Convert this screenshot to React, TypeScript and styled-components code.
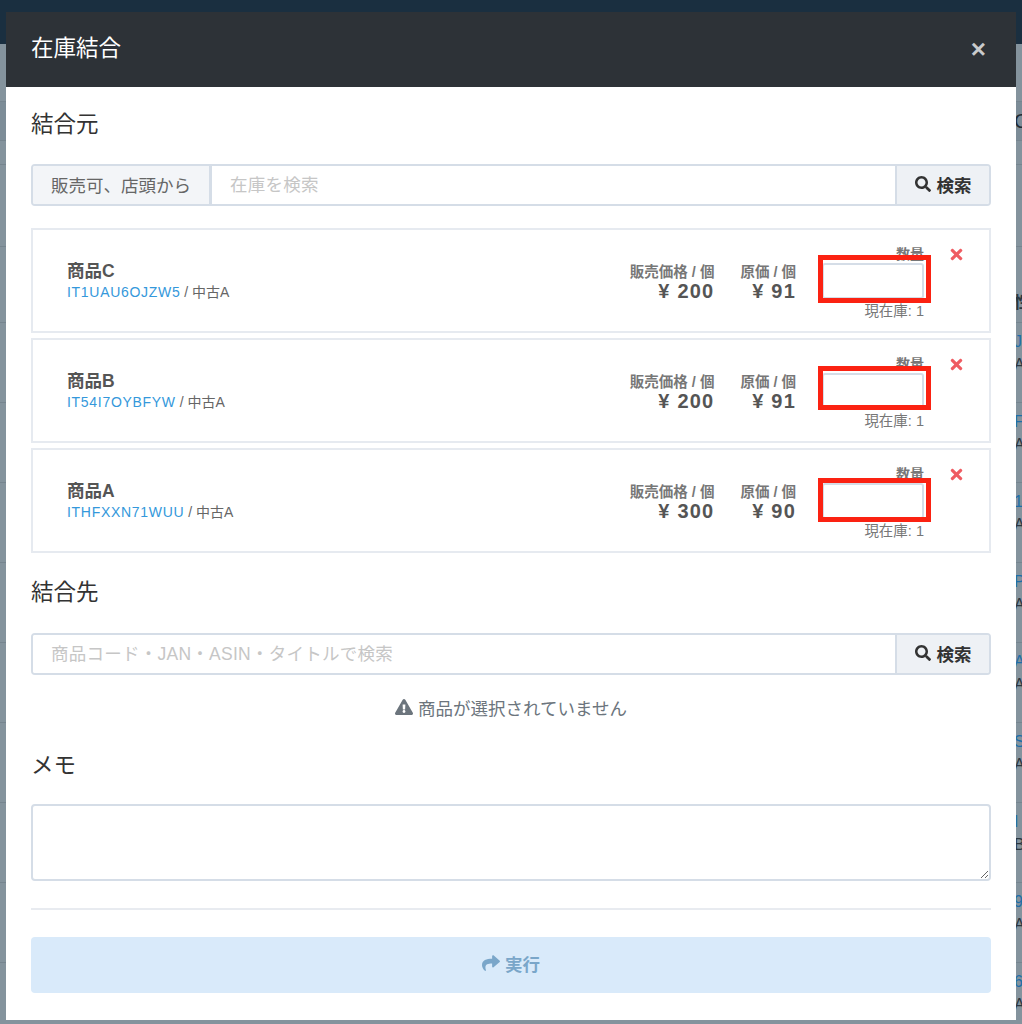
import styled, { createGlobalStyle } from 'styled-components';
import { FaExclamationTriangle, FaSearch, FaShare, FaTimes } from 'react-icons/fa';

const items = [
  { name: '商品C', code: 'IT1UAU6OJZW5', grade: '中古A', price: '200', cost: '91', markTop: 27, markHeight: 48 },
  { name: '商品B', code: 'IT54I7OYBFYW', grade: '中古A', price: '200', cost: '91', markTop: 28, markHeight: 44 },
  { name: '商品A', code: 'ITHFXXN71WUU', grade: '中古A', price: '300', cost: '90', markTop: 30, markHeight: 44 },
];

const backRows = [
  ['J', 'A'], ['F', 'A'], ['1', 'A'], ['P', 'A'], ['A', 'A'], ['S', 'A'], ['I', 'B'], ['9', 'A'], ['6', 'A'],
];

function SearchBar({ placeholder, prefix }: { placeholder: string; prefix?: string }) {
  return (
    <InputGroup>
      {prefix && <Addon>{prefix}</Addon>}
      <SearchInput placeholder={placeholder} />
      <SearchButton type="button"><FaSearch size={16} />検索</SearchButton>
    </InputGroup>
  );
}

function App() {
  return (
    <Page>
      <GlobalStyle />
      <Backdrop>
        <TopBar />
        <BackSpacer />
        <BackToolbar>C</BackToolbar>
        <BackLine $height={24} />
        <BackLine $height={82} />
        <BackLine $height={76}><BackHead>性</BackHead></BackLine>
        {backRows.map((r, i) => (
          <BackRow key={i}>
            <BackCode>{r[0]}</BackCode>
            <BackGrade>{r[1]}</BackGrade>
          </BackRow>
        ))}
      </Backdrop>
      <Modal>
        <ModalHeader>
          <ModalTitle>在庫結合</ModalTitle>
          <CloseButton type="button">×</CloseButton>
        </ModalHeader>
        <ModalBody>
          <SectionTitle>結合元</SectionTitle>
          <SearchBar prefix="販売可、店頭から" placeholder="在庫を検索" />
          <CardList>
            {items.map((item) => (
              <Card key={item.code}>
                <ItemInfo>
                  <ItemName>{item.name}</ItemName>
                  <ItemMeta><ItemCode>{item.code}</ItemCode> / {item.grade}</ItemMeta>
                </ItemInfo>
                <PriceCol>
                  <PriceLabel>販売価格 / 個</PriceLabel>
                  <PriceValue>¥ {item.price}</PriceValue>
                </PriceCol>
                <PriceCol>
                  <PriceLabel>原価 / 個</PriceLabel>
                  <PriceValue>¥ {item.cost}</PriceValue>
                </PriceCol>
                <QtyCol>
                  <QtyLabel>数量</QtyLabel>
                  <QtyInput />
                  <StockLabel>現在庫: 1</StockLabel>
                </QtyCol>
                <DeleteIcon><FaTimes size={17} /></DeleteIcon>
                <RedMark $top={item.markTop} $height={item.markHeight} />
              </Card>
            ))}
          </CardList>
          <TargetTitle>結合先</TargetTitle>
          <SearchBar placeholder="商品コード・JAN・ASIN・タイトルで検索" />
          <Warning><FaExclamationTriangle size={18} />商品が選択されていません</Warning>
          <MemoTitle>メモ</MemoTitle>
          <Memo />
          <Divider />
          <RunButton type="button"><FaShare size={18} />実行</RunButton>
        </ModalBody>
      </Modal>
    </Page>
  );
}

export default App;

const GlobalStyle = createGlobalStyle`
html, body {
  margin: 0;
  padding: 0;
  height: 1024px;
  overflow: hidden;
  background: #84939d;
}
* {
  box-sizing: border-box;
}
body, input, textarea, button {
  font-family: "Liberation Sans", "Noto Sans CJK JP", sans-serif;
}
`;

const Page = styled.div`
position: relative;
width: 1022px;
height: 1024px;
overflow: hidden;
background: #84939d;
`;

const Backdrop = styled.div`
display: flex;
flex-direction: column;
height: 1024px;
`;

const TopBar = styled.div`
height: 44px;
background: #1a2f40;
flex-shrink: 0;
`;

const BackSpacer = styled.div`
height: 57px;
flex-shrink: 0;
`;

const BackToolbar = styled.div`
height: 40px;
flex-shrink: 0;
padding-left: 1014px;
background: #7c8c97;
border-top: 1px solid #76858f;
border-bottom: 1px solid #76858f;
color: #1f2a33;
font-size: 20px;
line-height: 38px;
`;

const BackLine = styled.div<{ $height: number }>`
height: ${(p) => p.$height}px;
flex-shrink: 0;
border-bottom: 1px solid #76858f;
position: relative;
`;

const BackHead = styled.span`
position: absolute;
left: 1014px;
bottom: 9px;
color: #2b3640;
font-size: 16px;
font-weight: bold;
`;

const BackRow = styled.div`
height: 80px;
flex-shrink: 0;
padding: 8px 0 0 1014px;
border-bottom: 1px solid #76858f;
`;

const BackCode = styled.div`
color: #1f6ea8;
font-size: 16px;
line-height: 22px;
`;

const BackGrade = styled.div`
color: #2b3640;
font-size: 16px;
line-height: 24px;
`;

const Modal = styled.div`
position: absolute;
left: 6px;
top: 12px;
width: 1010px;
height: 1008px;
display: flex;
flex-direction: column;
background: #fff;
`;

const ModalHeader = styled.div`
height: 75px;
flex-shrink: 0;
display: flex;
align-items: center;
justify-content: space-between;
padding: 0 30px 7px 25px;
background: #2d3237;
`;

const ModalTitle = styled.div`
color: #fff;
font-size: 22.5px;
`;

const CloseButton = styled.button`
border: none;
background: none;
padding: 0;
margin-top: 5px;
color: #c9cbcc;
font-size: 26px;
font-weight: bold;
line-height: 1;
cursor: pointer;
`;

const ModalBody = styled.div`
display: flex;
flex-direction: column;
padding: 0 25px;
`;

const SectionTitle = styled.div`
height: 28px;
margin: 24px 0 25px;
color: #333;
font-size: 22.5px;
line-height: 28px;
`;

const InputGroup = styled.div`
display: flex;
height: 42px;
border: 2px solid #d5dde7;
border-radius: 4px;
overflow: hidden;
flex-shrink: 0;
`;

const Addon = styled.div`
width: 179px;
flex-shrink: 0;
display: flex;
align-items: center;
justify-content: center;
padding-bottom: 2px;
border-right: 3px solid #d5dde7;
background: #f3f5f8;
color: #666;
font-size: 17.5px;
`;

const SearchInput = styled.input`
flex: 1;
min-width: 0;
border: none;
outline: none;
padding: 0 18px;
font-size: 17.5px;
letter-spacing: 0.25px;
color: #333;
&::placeholder {
  color: #c6c6c6;
}
`;

const SearchButton = styled.button`
width: 94px;
flex-shrink: 0;
display: flex;
align-items: center;
justify-content: center;
gap: 6px;
border: none;
border-left: 2px solid #d5dde7;
background: #eef1f5;
color: #333;
font-size: 17.5px;
font-weight: bold;
padding: 0 0 2px;
cursor: pointer;
`;

const CardList = styled.div`
display: flex;
flex-direction: column;
gap: 5px;
margin-top: 22px;
`;

const Card = styled.div`
position: relative;
height: 105px;
display: flex;
align-items: center;
gap: 26px;
padding: 0 26px 0 34px;
border: 2px solid #e6eaf0;
`;

const ItemInfo = styled.div`
flex: 1;
min-width: 0;
padding-top: 1px;
`;

const ItemName = styled.div`
color: #555;
font-size: 17.5px;
font-weight: bold;
line-height: 22px;
`;

const ItemMeta = styled.div`
color: #666;
font-size: 14px;
line-height: 20px;
`;

const ItemCode = styled.span`
color: #3498db;
letter-spacing: 0.7px;
`;

const PriceCol = styled.div`
padding-top: 4px;
text-align: right;
`;

const PriceLabel = styled.div`
color: #777;
font-size: 14.5px;
font-weight: bold;
line-height: 16px;
`;

const PriceValue = styled.div`
color: #555;
font-size: 20px;
font-weight: bold;
letter-spacing: 1.2px;
line-height: 22px;
`;

const QtyCol = styled.div`
width: 102px;
padding-top: 4px;
display: flex;
flex-direction: column;
align-items: flex-end;
`;

const QtyLabel = styled.div`
color: #777;
font-size: 14px;
font-weight: bold;
line-height: 17px;
`;

const QtyInput = styled.input`
width: 102px;
height: 36px;
border: 2px solid #d5dde7;
border-radius: 3px;
outline: none;
background: #fff;
`;

const StockLabel = styled.div`
margin-top: 3px;
color: #777;
font-size: 14.5px;
line-height: 18px;
`;

const DeleteIcon = styled.div`
width: 13px;
display: flex;
justify-content: center;
align-self: flex-start;
margin-top: 16px;
color: #ef5b61;
line-height: 0;
& svg {
  flex-shrink: 0;
}
`;

const RedMark = styled.div<{ $top: number; $height: number }>`
position: absolute;
left: 785px;
top: ${(p) => p.$top - 2}px;
width: 113px;
height: ${(p) => p.$height}px;
border: 5px solid #fb2212;
pointer-events: none;
`;

const TargetTitle = styled(SectionTitle)`
margin: 26px 0 26px;
`;

const Warning = styled.div`
display: flex;
align-items: center;
justify-content: center;
gap: 5px;
height: 24px;
margin-top: 20px;
color: #6c757d;
font-size: 17.5px;
`;

const MemoTitle = styled(SectionTitle)`
margin: 33px 0 24px;
`;

const Memo = styled.textarea`
display: block;
width: 100%;
height: 77px;
resize: vertical;
border: 2px solid #d5dde7;
border-radius: 4px;
outline: none;
`;

const Divider = styled.hr`
width: 100%;
height: 2px;
margin: 27px 0;
border: none;
background: #e8ebf0;
`;

const RunButton = styled.button`
height: 56px;
display: flex;
align-items: center;
justify-content: center;
gap: 5px;
padding: 0 0 4px;
border: none;
border-radius: 4px;
background: #d9eafa;
color: #7aa6c9;
font-size: 17.5px;
font-weight: bold;
cursor: pointer;
`;
